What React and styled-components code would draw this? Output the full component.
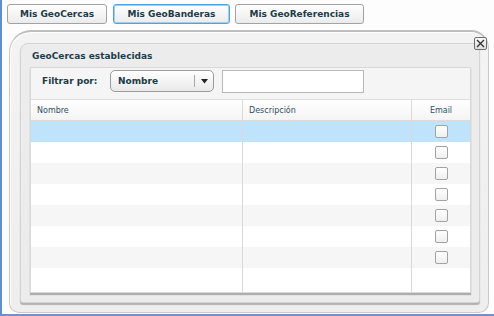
import React from 'react';
import styled, { createGlobalStyle } from 'styled-components';

const Global = createGlobalStyle`
  html, body { margin: 0; padding: 0; background: #fdfdfd; }
  body { font-family: "DejaVu Sans", Verdana, sans-serif; }
  * { box-sizing: border-box; }
`;

const Frame = styled.div`
  width: 494px;
  height: 316px;
  border-left: 2px solid #5d8fd2;
  border-bottom: 2px solid #6f93c4;
  background: #fdfdfd;
  overflow: hidden;
  display: flex;
  flex-direction: column;
`;

const TabBar = styled.div`
  display: flex;
  gap: 6px;
  padding: 4px 0 0 5px;
  height: 24px;
`;

const Tab = styled.button`
  width: ${p => p.$w}px;
  height: 20px;
  margin-right: ${p => p.$mr || 0}px;
  border: 1px solid ${p => (p.$active ? '#4ea3e3' : '#a3a3a3')};
  box-shadow: ${p => (p.$active ? 'inset 0 0 0 1px #9ccff3' : 'inset 0 1px 0 #fff')};
  border-radius: 3px;
  background: linear-gradient(#ffffff, #ebebeb);
  font: bold 9px "DejaVu Sans", Verdana, sans-serif;
  color: #1d3b48;
  padding: 0;
`;

const Panel = styled.div`
  position: relative;
  margin: 6px 0 0 7px;
  width: 480px;
  height: 283px;
  background: linear-gradient(#f3f3f3, #eeeeee);
  border: 1px solid #c9c9c9;
  border-top: 2px solid #bfbfbf;
  border-radius: 22px 18px 10px 10px;
  padding: 11px 8px 0 10px;
  box-shadow: inset 1px 1px 0 #fff;
`;

const CloseButton = styled.button`
  position: absolute;
  top: 5px;
  right: 1px;
  width: 13px;
  height: 13px;
  padding: 0;
  border: 1px solid #6c6c6c;
  border-radius: 2px;
  background: linear-gradient(#fafafa, #dedede);
  display: flex;
  align-items: center;
  justify-content: center;
`;

const InnerBox = styled.div`
  width: 460px;
  height: 260px;
  background: #ececec;
  border: 1px solid #d3d3d3;
  border-radius: 8px 4px 3px 3px;
  box-shadow: 0 2px 1px #b2b2b2;
  display: flex;
  flex-direction: column;
`;

const Title = styled.div`
  height: 23px;
  padding-left: 11px;
  font: bold 9px "DejaVu Sans", Verdana, sans-serif;
  line-height: 24px;
  color: #1c3e4c;
`;

const GridBox = styled.div`
  margin-left: 9px;
  width: 441px;
  height: 226px;
  background: #fff;
  border: 1px solid #d8d8d8;
  box-shadow: 0 2px 1px #adadad;
  display: flex;
  flex-direction: column;
`;

const Toolbar = styled.div`
  height: 31px;
  flex: none;
  background: #f5f5f5;
  display: flex;
  align-items: flex-start;
  padding: 2px 0 0 11px;
`;

const Label = styled.span`
  width: 68px;
  margin-top: 6px;
  font: bold 9px "DejaVu Sans", Verdana, sans-serif;
  color: #1c3a46;
`;

const Select = styled.div`
  width: 104px;
  height: 22px;
  border: 1px solid #9b9b9b;
  border-radius: 5px;
  background: linear-gradient(#ffffff, #e9e9e9);
  display: flex;
  align-items: center;
  font: bold 9px "DejaVu Sans", Verdana, sans-serif;
  color: #1c3a46;
`;

const SelectText = styled.span`
  flex: 1;
  padding-left: 7px;
`;

const SelectDivider = styled.span`
  width: 1px;
  height: 12px;
  background: #a8a8a8;
`;

const SelectArrow = styled.span`
  width: 18px;
  display: flex;
  justify-content: center;
`;

const TextInput = styled.input`
  margin-left: 8px;
  width: 142px;
  height: 23px;
  border: 1px solid #b9b9b9;
  background: #fff;
  padding: 0 4px;
  outline: none;
`;

const Row = styled.div`
  display: grid;
  grid-template-columns: 212px 169px 1fr;
  height: ${p => p.$h || 21}px;
  flex: ${p => (p.$fill ? 1 : 'none')};
  background: ${p => p.$bg || '#fff'};
`;

const HeaderRow = styled(Row)`
  height: 22px;
  border-top: 1px solid #dedede;
  border-bottom: 1px solid #dcdcdc;
  background: linear-gradient(#ffffff, #f4f4f4);
`;

const Cell = styled.div`
  border-right: ${p => (p.$last ? 'none' : '1px solid #d9d9d9')};
  display: flex;
  align-items: center;
  justify-content: ${p => (p.$center ? 'center' : 'flex-start')};
  padding-left: ${p => (p.$center ? 0 : 6)}px;
`;

const HeaderCell = styled(Cell)`
  font: 8px "DejaVu Sans", Verdana, sans-serif;
  color: #30505c;
`;

const Checkbox = styled.span`
  width: 13px;
  height: 13px;
  border: 1px solid #a2a2a2;
  border-radius: 2px;
  background: linear-gradient(#ffffff, #efefef);
  margin-left: 1px;
`;

const rowBg = i => (i === 0 ? '#bfe3fa' : i % 2 === 0 ? '#f6f6f6' : '#ffffff');

export default function App() {
  const rows = Array.from({ length: 8 }, (_, i) => i);
  return (
    <>
      <Global />
      <Frame>
        <TabBar>
          <Tab $w={100}>Mis GeoCercas</Tab>
          <Tab $w={117} $active $mr={-1}>Mis GeoBanderas</Tab>
          <Tab $w={129}>Mis GeoReferencias</Tab>
        </TabBar>
        <Panel>
          <CloseButton aria-label="Cerrar">
            <svg width="9" height="9" viewBox="0 0 9 9">
              <path d="M1 1 L8 8 M8 1 L1 8" stroke="#333" strokeWidth="1.4" />
            </svg>
          </CloseButton>
          <InnerBox>
            <Title>GeoCercas establecidas</Title>
            <GridBox>
              <Toolbar>
                <Label>Filtrar por:</Label>
                <Select>
                  <SelectText>Nombre</SelectText>
                  <SelectDivider />
                  <SelectArrow>
                    <svg width="7" height="5" viewBox="0 0 7 5">
                      <path d="M0 0 H7 L3.5 4.5 Z" fill="#222" />
                    </svg>
                  </SelectArrow>
                </Select>
                <TextInput />
              </Toolbar>
              <HeaderRow>
                <HeaderCell>Nombre</HeaderCell>
                <HeaderCell>Descripción</HeaderCell>
                <HeaderCell $last $center>Email</HeaderCell>
              </HeaderRow>
              {rows.map(i => (
                <Row key={i} $bg={rowBg(i)}>
                  <Cell />
                  <Cell />
                  <Cell $last $center>{i < 7 && <Checkbox />}</Cell>
                </Row>
              ))}
              <Row $fill>
                <Cell />
                <Cell />
                <Cell $last />
              </Row>
            </GridBox>
          </InnerBox>
        </Panel>
      </Frame>
    </>
  );
}
